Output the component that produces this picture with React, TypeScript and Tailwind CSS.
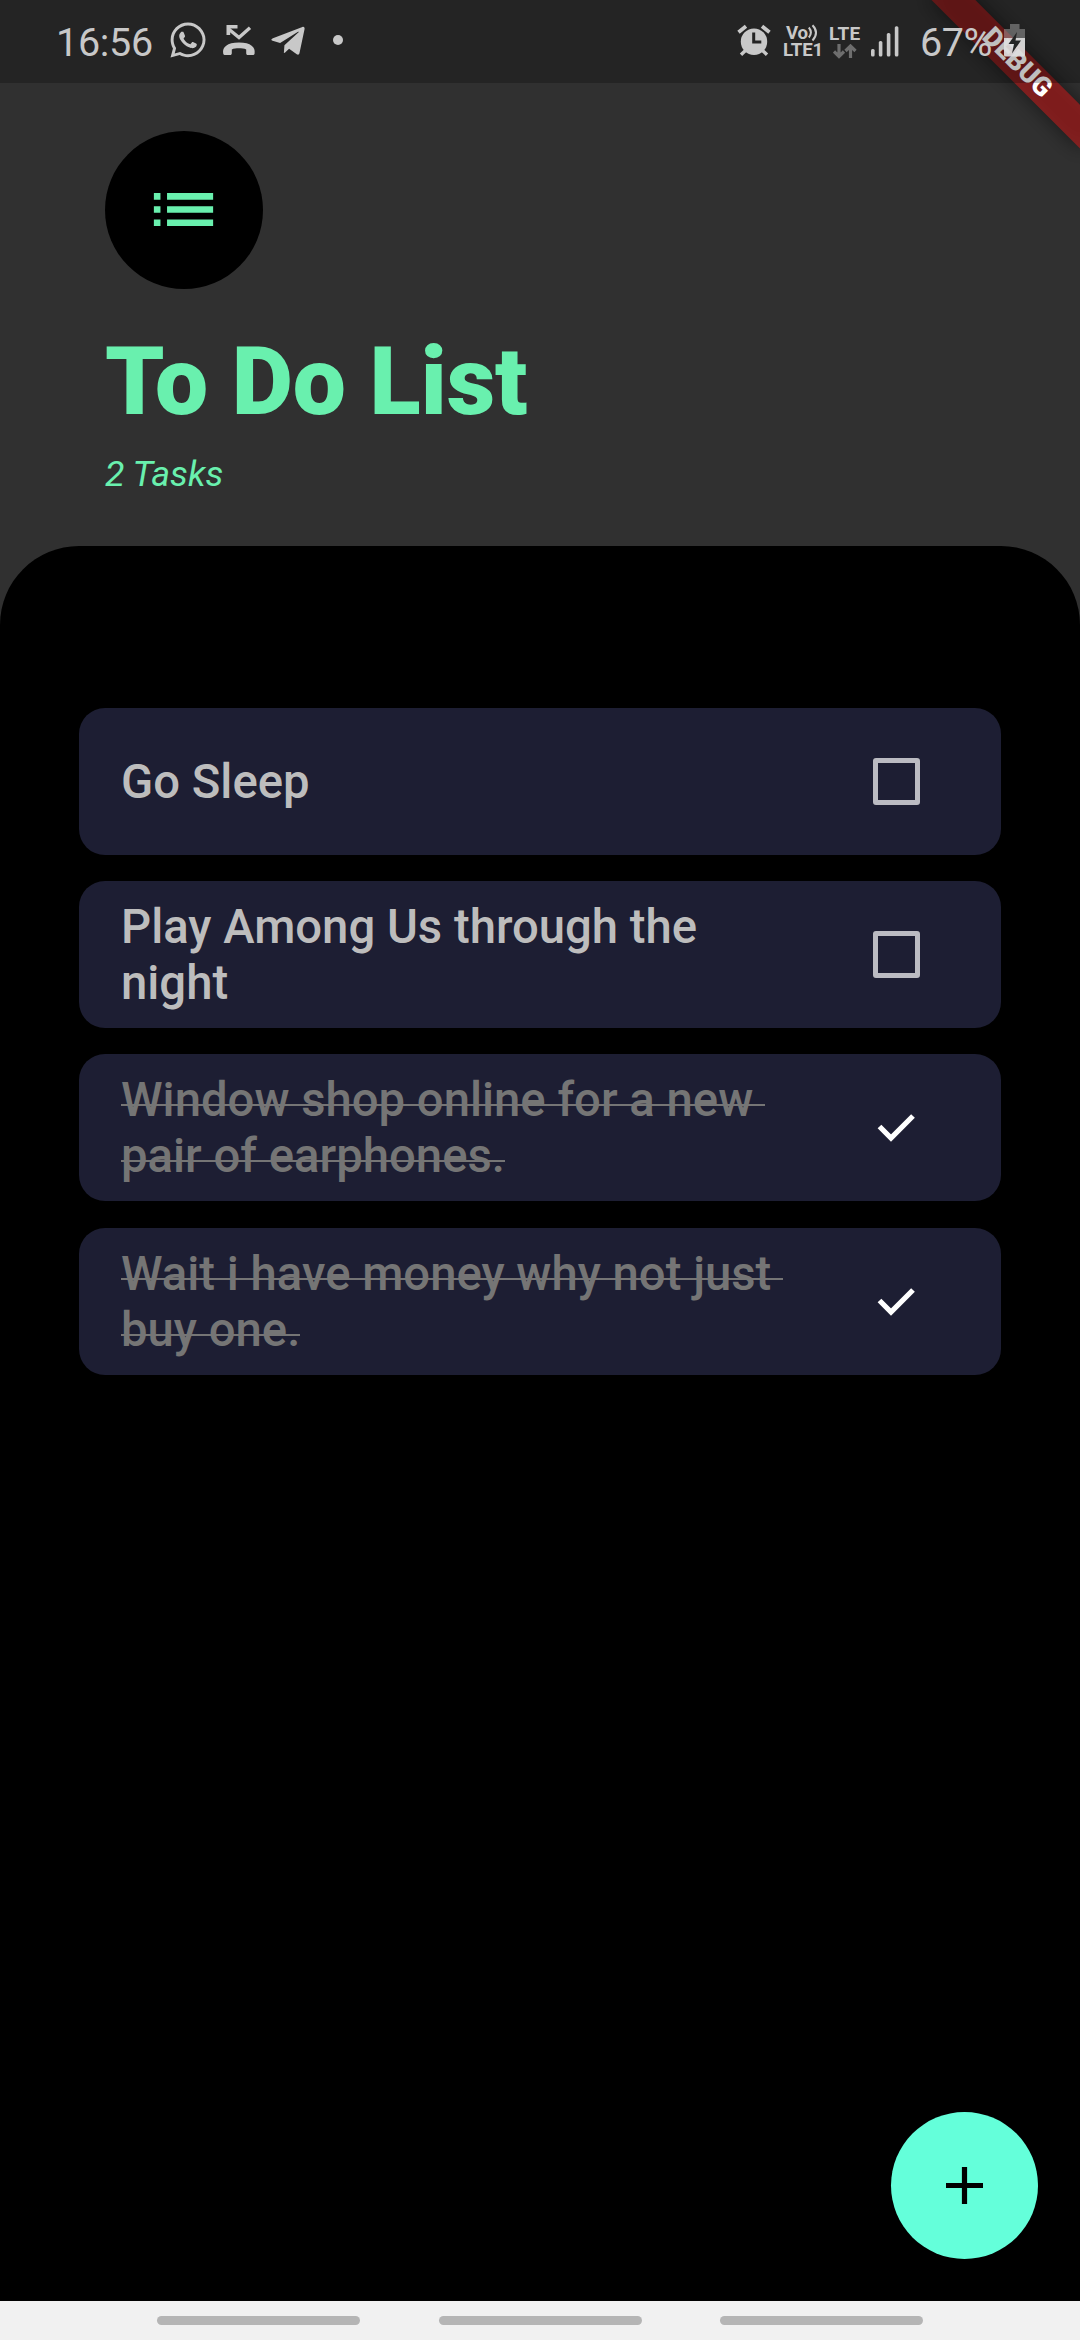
import React from "react";
import { FaWhatsapp, FaTelegramPlane } from "react-icons/fa";
import { MdList } from "react-icons/md";

type Task = { lines: string[]; done: boolean };

const tasks: Task[] = [
  { lines: ["Go Sleep"], done: false },
  { lines: ["Play Among Us through the", "night"], done: false },
  { lines: ["Window shop online for a new ", "pair of earphones."], done: true },
  { lines: ["Wait i have money why not just ", "buy one."], done: true },
];

function MissedCallIcon() {
  return (
    <svg className="ml-[14px] mt-[24px] h-[32px] w-[34px] shrink-0" viewBox="0 0 34 32" fill="none">
      <path d="M6 4.5 17 13.5 28 3.8" stroke="#c8c8c8" strokeWidth="3.4" />
      <path d="M4.5 1H15.5V4.6H8.2V11H4.5Z" fill="#c8c8c8" />
      <path
        d="M1.2 29.4C0.2 23.4 5 18.6 17 18.6S33.600 23.4 32.600 29.4C32.400 30.6 31.8 31 30.400 31H26C24.700 31 24.200 30.400 24.200 29V25.400C20.400 24 13.400 24 9.800 25.400V29C9.800 30.400 9.200 31 8 31H3.400C2.200 31 1.400 30.600 1.200 29.400Z"
        fill="#c8c8c8"
      />
    </svg>
  );
}

function AlarmIcon() {
  return (
    <svg className="mt-[24px] h-[33px] w-[34px] shrink-0" viewBox="0 0 34 33">
      <g stroke="#c8c8c8" strokeWidth="3.800">
        <path d="M1.500 8.200 9 2.200M25 2.200 32.500 8.200" />
        <path d="M9 26 4 30.800M25 26 30 30.800" strokeWidth="3.400" />
      </g>
      <circle cx="17" cy="17.700" r="13.200" fill="#c8c8c8" />
      <path d="M16.700 8.500V18H24.300" fill="none" stroke="#242424" strokeWidth="3" />
    </svg>
  );
}

function SignalIcon() {
  return (
    <svg className="ml-[10px] mt-[26px] h-[31px] w-[28px] shrink-0" viewBox="0 0 28 31" fill="#c8c8c8">
      <rect x="0" y="23" width="3.600" height="7.500" rx="1.500" />
      <rect x="7.800" y="15" width="3.600" height="15.500" rx="1.500" />
      <rect x="15.800" y="7" width="3.600" height="23.500" rx="1.500" />
      <rect x="23.800" y="0.300" width="3.600" height="30.200" rx="1.500" />
    </svg>
  );
}

function BatteryIcon() {
  return (
    <svg className="absolute left-[1004px] top-[24px] h-[34px] w-[22px]" viewBox="0 0 22 34">
      <path d="M6 0H15.500V5H21V14H0V5H6Z" fill="#c8c8c8" fillOpacity="0.400" />
      <path d="M0 14H21V31Q21 32.500 19.500 32.500H1.500Q0 32.500 0 31Z" fill="#e0e0e0" fillOpacity="0.920" />
      <path d="M13 8 4.500 20H10L8 29.500 17 16.500H11.500Z" fill="#242424" />
    </svg>
  );
}

function StatusBar() {
  return (
    <div className="absolute inset-x-0 top-0 z-20 flex h-[83px] items-start bg-black/25 text-[#c8c8c8]">
      <span className="ml-[56px] mt-[19px] w-[100px] text-[39.500px] leading-[48px] tracking-[-0.300px]">16:56</span>
      <FaWhatsapp className="ml-[12px] mt-[20px] size-[40px] shrink-0" />
      <MissedCallIcon />
      <FaTelegramPlane className="ml-[13px] mt-[22px] size-[38px] shrink-0" />
      <span className="ml-[26px] mt-[35px] size-[10px] shrink-0 rounded-full bg-[#c8c8c8]" />
      <div className="ml-[394px] flex items-start">
        <AlarmIcon />
        <div className="ml-[12px] mt-[25px] flex w-[40px] flex-col text-[18.700px] font-bold leading-[17px]">
          <div className="flex pl-[3px]">
            <span className="w-[21px] tracking-[-0.300px]">Vo</span>
            <svg className="-mt-px h-[18px] w-[12px]" viewBox="0 0 12 18" fill="none" stroke="#c8c8c8" strokeWidth="2">
              <path d="M1.800 3.500Q6 8.500 1.800 13.500M5.500 1.200Q12.500 8.500 5.500 16.500" />
            </svg>
          </div>
          <span className="whitespace-nowrap tracking-[-0.200px]">LTE1</span>
        </div>
        <div className="ml-[6px] mt-[25px] flex w-[32px] flex-col text-[19px] font-bold leading-[17px]">
          <span className="tracking-[0.300px]">LTE</span>
          <svg className="ml-[4px] mt-[2px] h-[15px] w-[24px]" viewBox="0 0 24 15" fill="none" stroke="#6e6e6e" strokeWidth="3.200">
            <path d="M6 0V12M1 7.500 6 12.500 11 7.500M17.500 14V2M12.500 7 17.500 2 22.500 7" />
          </svg>
        </div>
        <SignalIcon />
        <span className="ml-[21px] mt-[19px] text-[39.500px] leading-[48px] tracking-[-0.500px]">67%</span>
      </div>
      <BatteryIcon />
    </div>
  );
}

function DebugBanner() {
  return (
    <div className="pointer-events-none absolute right-0 top-0 z-10 size-[260px] overflow-hidden">
      <div className="absolute right-0 top-0 size-0 rotate-45">
        <div className="absolute left-[-105px] top-[73.500px] h-[31.500px] w-[210px] bg-black/50 blur-[10px]" />
        <div className="absolute left-[-105px] top-[73.500px] flex h-[31.500px] w-[210px] items-center justify-center bg-[#b71c1c]/63 pb-[2px] text-[26.800px] font-black leading-none text-white">
          DEBUG
        </div>
      </div>
    </div>
  );
}

function TaskRow({ task }: { task: Task }) {
  return (
    <li className="flex h-[147px] items-center rounded-[26px] bg-[#1d1e33] pl-[42px] pr-[81px] last:mt-px">
      <div
        className={
          task.done
            ? "flex-1 whitespace-pre pt-[2px] text-[47.250px] font-medium leading-[55.400px] text-[#757575]"
            : "flex-1 whitespace-pre pt-[2px] text-[47.250px] font-medium leading-[55.400px] text-[#bdbdbd]"
        }
      >
        {task.lines.map((line) => (
          <div key={line} className="flex">
            <span
              className={
                task.done
                  ? "relative after:absolute after:inset-x-0 after:top-[31px] after:h-[2.400px] after:bg-[#757575]"
                  : ""
              }
            >
              {line}
            </span>
          </div>
        ))}
      </div>
      {task.done ? (
        <svg className="mb-[2px] size-[48px]" viewBox="0 0 48 48" fill="none" stroke="#ffffff" strokeWidth="5.250">
          <path d="M7.500 23.500 19 35 41 13" />
        </svg>
      ) : (
        <span className="size-[47px] rounded-[3px] border-[5px] border-[#bbbbc2]" />
      )}
    </li>
  );
}

export default function App() {
  return (
    <div className="relative flex h-[2340px] w-[1080px] flex-col overflow-hidden bg-[#303030] font-['Roboto',sans-serif]">
      <header className="flex h-[546px] shrink-0 flex-col items-start pl-[105px] pt-[131px] text-[#69f0ae]">
        <div className="flex size-[157.500px] items-center justify-center rounded-full bg-black">
          <MdList className="size-[79px]" />
        </div>
        <h1 className="mt-[37px] whitespace-nowrap text-[94.500px] font-black leading-[111px]">To Do List</h1>
        <p className="mt-[16px] whitespace-nowrap text-[35.700px] italic leading-[43px]">2 Tasks</p>
      </header>
      <main className="flex-1 rounded-t-[79px] bg-black px-[79px] pt-[162px]">
        <ul className="flex flex-col gap-[26px]">
          {tasks.map((task) => (
            <TaskRow key={task.lines[0]} task={task} />
          ))}
        </ul>
      </main>
      <nav className="flex h-[39px] shrink-0 items-start gap-[78.500px] bg-[#f1f1f1] pl-[157px] pt-[15px]">
        <span className="h-[9px] w-[203px] rounded-full bg-[#b5b5b5]" />
        <span className="h-[9px] w-[203px] rounded-full bg-[#b5b5b5]" />
        <span className="h-[9px] w-[203px] rounded-full bg-[#b5b5b5]" />
      </nav>
      <button className="absolute bottom-[81px] right-[42px] flex size-[147px] items-center justify-center rounded-full bg-[#64ffda]">
        <svg className="size-[37px]" viewBox="0 0 37 37" fill="none" stroke="#000000" strokeWidth="5.200">
          <path d="M18.500 0V37M0 18.500H37" />
        </svg>
      </button>
      <DebugBanner />
      <StatusBar />
    </div>
  );
}
